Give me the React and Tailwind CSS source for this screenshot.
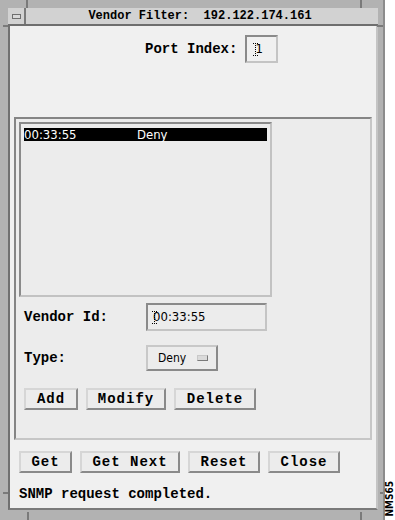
import React from 'react';

const mono = { fontFamily: '"Liberation Mono", "DejaVu Sans Mono", monospace' };
const narrow = { fontFamily: '"Liberation Sans Narrow", "DejaVu Sans Condensed", "Liberation Sans", sans-serif' };

const Btn = ({ label, w }) => (
    <div
        className={`${w} h-[22px] flex items-center justify-center bg-[#ececec] border-2 border-t-[#d6d6d6] border-l-[#d6d6d6] border-b-[#8a8a8a] border-r-[#8a8a8a] text-[14px] font-bold tracking-[1px] text-black`}
        style={mono}
    >
        {label}
    </div>
);

const Cursor = () => (
    <svg width="5" height="13" viewBox="0 0 5 13" className="shrink-0">
        <path d="M0 0.5h1M2 0.5h1M4 0.5h1M2 2.5h1M2 4.5h1M2 6.5h1M2 8.5h1M2 10.5h1M0 12.5h1M2 12.5h1M4 12.5h1" stroke="#000" strokeWidth="1" />
    </svg>
);

export default function App() {
    return (
        <div className="w-[395px] h-[520px] bg-white flex overflow-hidden">
            {/* window frame */}
            <div className="relative w-[385px] h-[520px] bg-[#b2b2b2] pl-[8px] pr-[5px] pt-[8px] pb-[10px] flex flex-col border-r-2 border-r-[#8c8c8c]">
                {/* resize corner marks */}
                <span className="absolute left-[26px] top-0 w-[2px] h-[8px] bg-[#7a7a7a]" />
                <span className="absolute left-[360px] top-0 w-[2px] h-[8px] bg-[#7a7a7a]" />
                <span className="absolute left-[3px] top-[25px] w-[5px] h-[2px] bg-[#7a7a7a]" />
                <span className="absolute left-[377px] top-[25px] w-[6px] h-[2px] bg-[#7a7a7a]" />
                <span className="absolute left-[3px] top-[492px] w-[5px] h-[2px] bg-[#7a7a7a]" />
                <span className="absolute left-[380px] top-[492px] w-[3px] h-[2px] bg-[#7a7a7a]" />
                <span className="absolute left-[27px] top-[512px] w-[2px] h-[8px] bg-[#7a7a7a]" />
                <span className="absolute left-[360px] top-[512px] w-[2px] h-[8px] bg-[#7a7a7a]" />

                {/* title bar */}
                <div className="h-[18px] flex bg-[#d2d2d2] border-b-2 border-b-[#6e6e6e]">
                    <div className="w-[18px] h-full flex items-center justify-center border-r-2 border-r-[#7a7a7a]">
                        <div className="w-[9px] h-[5px] border border-[#6e6e6e] bg-[#d8d8d8]" />
                    </div>
                    <div className="flex-1 flex items-center justify-center text-[12px] font-bold text-black pr-[4px] whitespace-pre" style={mono}>
                        Vendor Filter:  192.122.174.161
                    </div>
                </div>

                {/* content */}
                <div className="flex-1 flex flex-col bg-[#f0f0f0] border-l-2 border-l-[#707070] border-r-2 border-r-[#c4c4c4] border-b-2 border-b-[#7a7a7a]">
                    <div className="flex items-center pl-[135px] mt-[9px] h-[28px]">
                        <span className="text-[14px] font-bold text-black whitespace-pre" style={mono}>Port Index:</span>
                        <div className="ml-[8px] w-[33px] h-[28px] flex items-center pl-[6px] gap-[1px] border-2 border-t-[#8a8a8a] border-l-[#8a8a8a] border-b-[#c4c4c4] border-r-[#c4c4c4] bg-[#f0f0f0]">
                            <Cursor />
                            <span className="text-[13px] text-black -ml-[4px]" style={narrow}>1</span>
                        </div>
                    </div>

                    {/* inner panel */}
                    <div className="mx-[4px] mt-[54px] h-[323px] bg-[#ececec] border-2 border-t-[#858585] border-l-[#858585] border-b-[#c6c6c6] border-r-[#c6c6c6] pl-[3px] pt-[3px] flex flex-col">
                        <div className="w-[253px] h-[175px] border-2 border-t-[#8a8a8a] border-l-[#8a8a8a] border-b-[#c2c2c2] border-r-[#c2c2c2] pl-[3px] pt-[4px] pr-[3px]">
                            <div className="h-[13px] bg-black flex items-center text-white text-[13px] leading-none" style={narrow}>
                                <span className="w-[113px]">00:33:55</span>
                                <span>Deny</span>
                            </div>
                        </div>

                        <div className="flex items-center mt-[6px] pl-[5px]">
                            <span className="w-[122px] text-[14px] font-bold text-black" style={mono}>Vendor Id:</span>
                            <div className="w-[121px] h-[28px] flex items-center pl-[4px] border-2 border-t-[#8a8a8a] border-l-[#8a8a8a] border-b-[#c4c4c4] border-r-[#c4c4c4]">
                                <Cursor />
                                <span className="text-[13px] text-black -ml-[4px]" style={narrow}>00:33:55</span>
                            </div>
                        </div>

                        <div className="flex items-center mt-[14px] pl-[5px]">
                            <span className="w-[122px] text-[14px] font-bold text-black" style={mono}>Type:</span>
                            <div className="w-[72px] h-[26px] flex items-center pl-[10px] gap-[11px] border-2 border-t-[#c8c8c8] border-l-[#c8c8c8] border-b-[#8a8a8a] border-r-[#8a8a8a]">
                                <span className="text-[12px] text-black" style={narrow}>Deny</span>
                                <div className="w-[11px] h-[6px] border border-t-[#c8c8c8] border-l-[#c8c8c8] border-b-[#7a7a7a] border-r-[#7a7a7a] bg-[#dadada]" />
                            </div>
                        </div>

                        <div className="flex gap-[8px] mt-[17px] pl-[5px]">
                            <Btn label="Add" w="w-[54px]" />
                            <Btn label="Modify" w="w-[80px]" />
                            <Btn label="Delete" w="w-[82px]" />
                        </div>
                    </div>

                    <div className="flex gap-[8px] mt-[11px] pl-[9px]">
                        <Btn label="Get" w="w-[53px]" />
                        <Btn label="Get Next" w="w-[100px]" />
                        <Btn label="Reset" w="w-[72px]" />
                        <Btn label="Close" w="w-[72px]" />
                    </div>

                    <div className="mt-[11px] pl-[9px] text-[14px] font-bold text-black whitespace-pre" style={mono}>
                        SNMP request completed.
                    </div>
                </div>
            </div>

            {/* figure id strip */}
            <div className="flex-1 flex items-end justify-center pb-[4px]">
                <span className="text-[10px] font-bold text-black leading-none [writing-mode:vertical-rl] rotate-180" style={narrow}>NMS65</span>
            </div>
        </div>
    );
}
